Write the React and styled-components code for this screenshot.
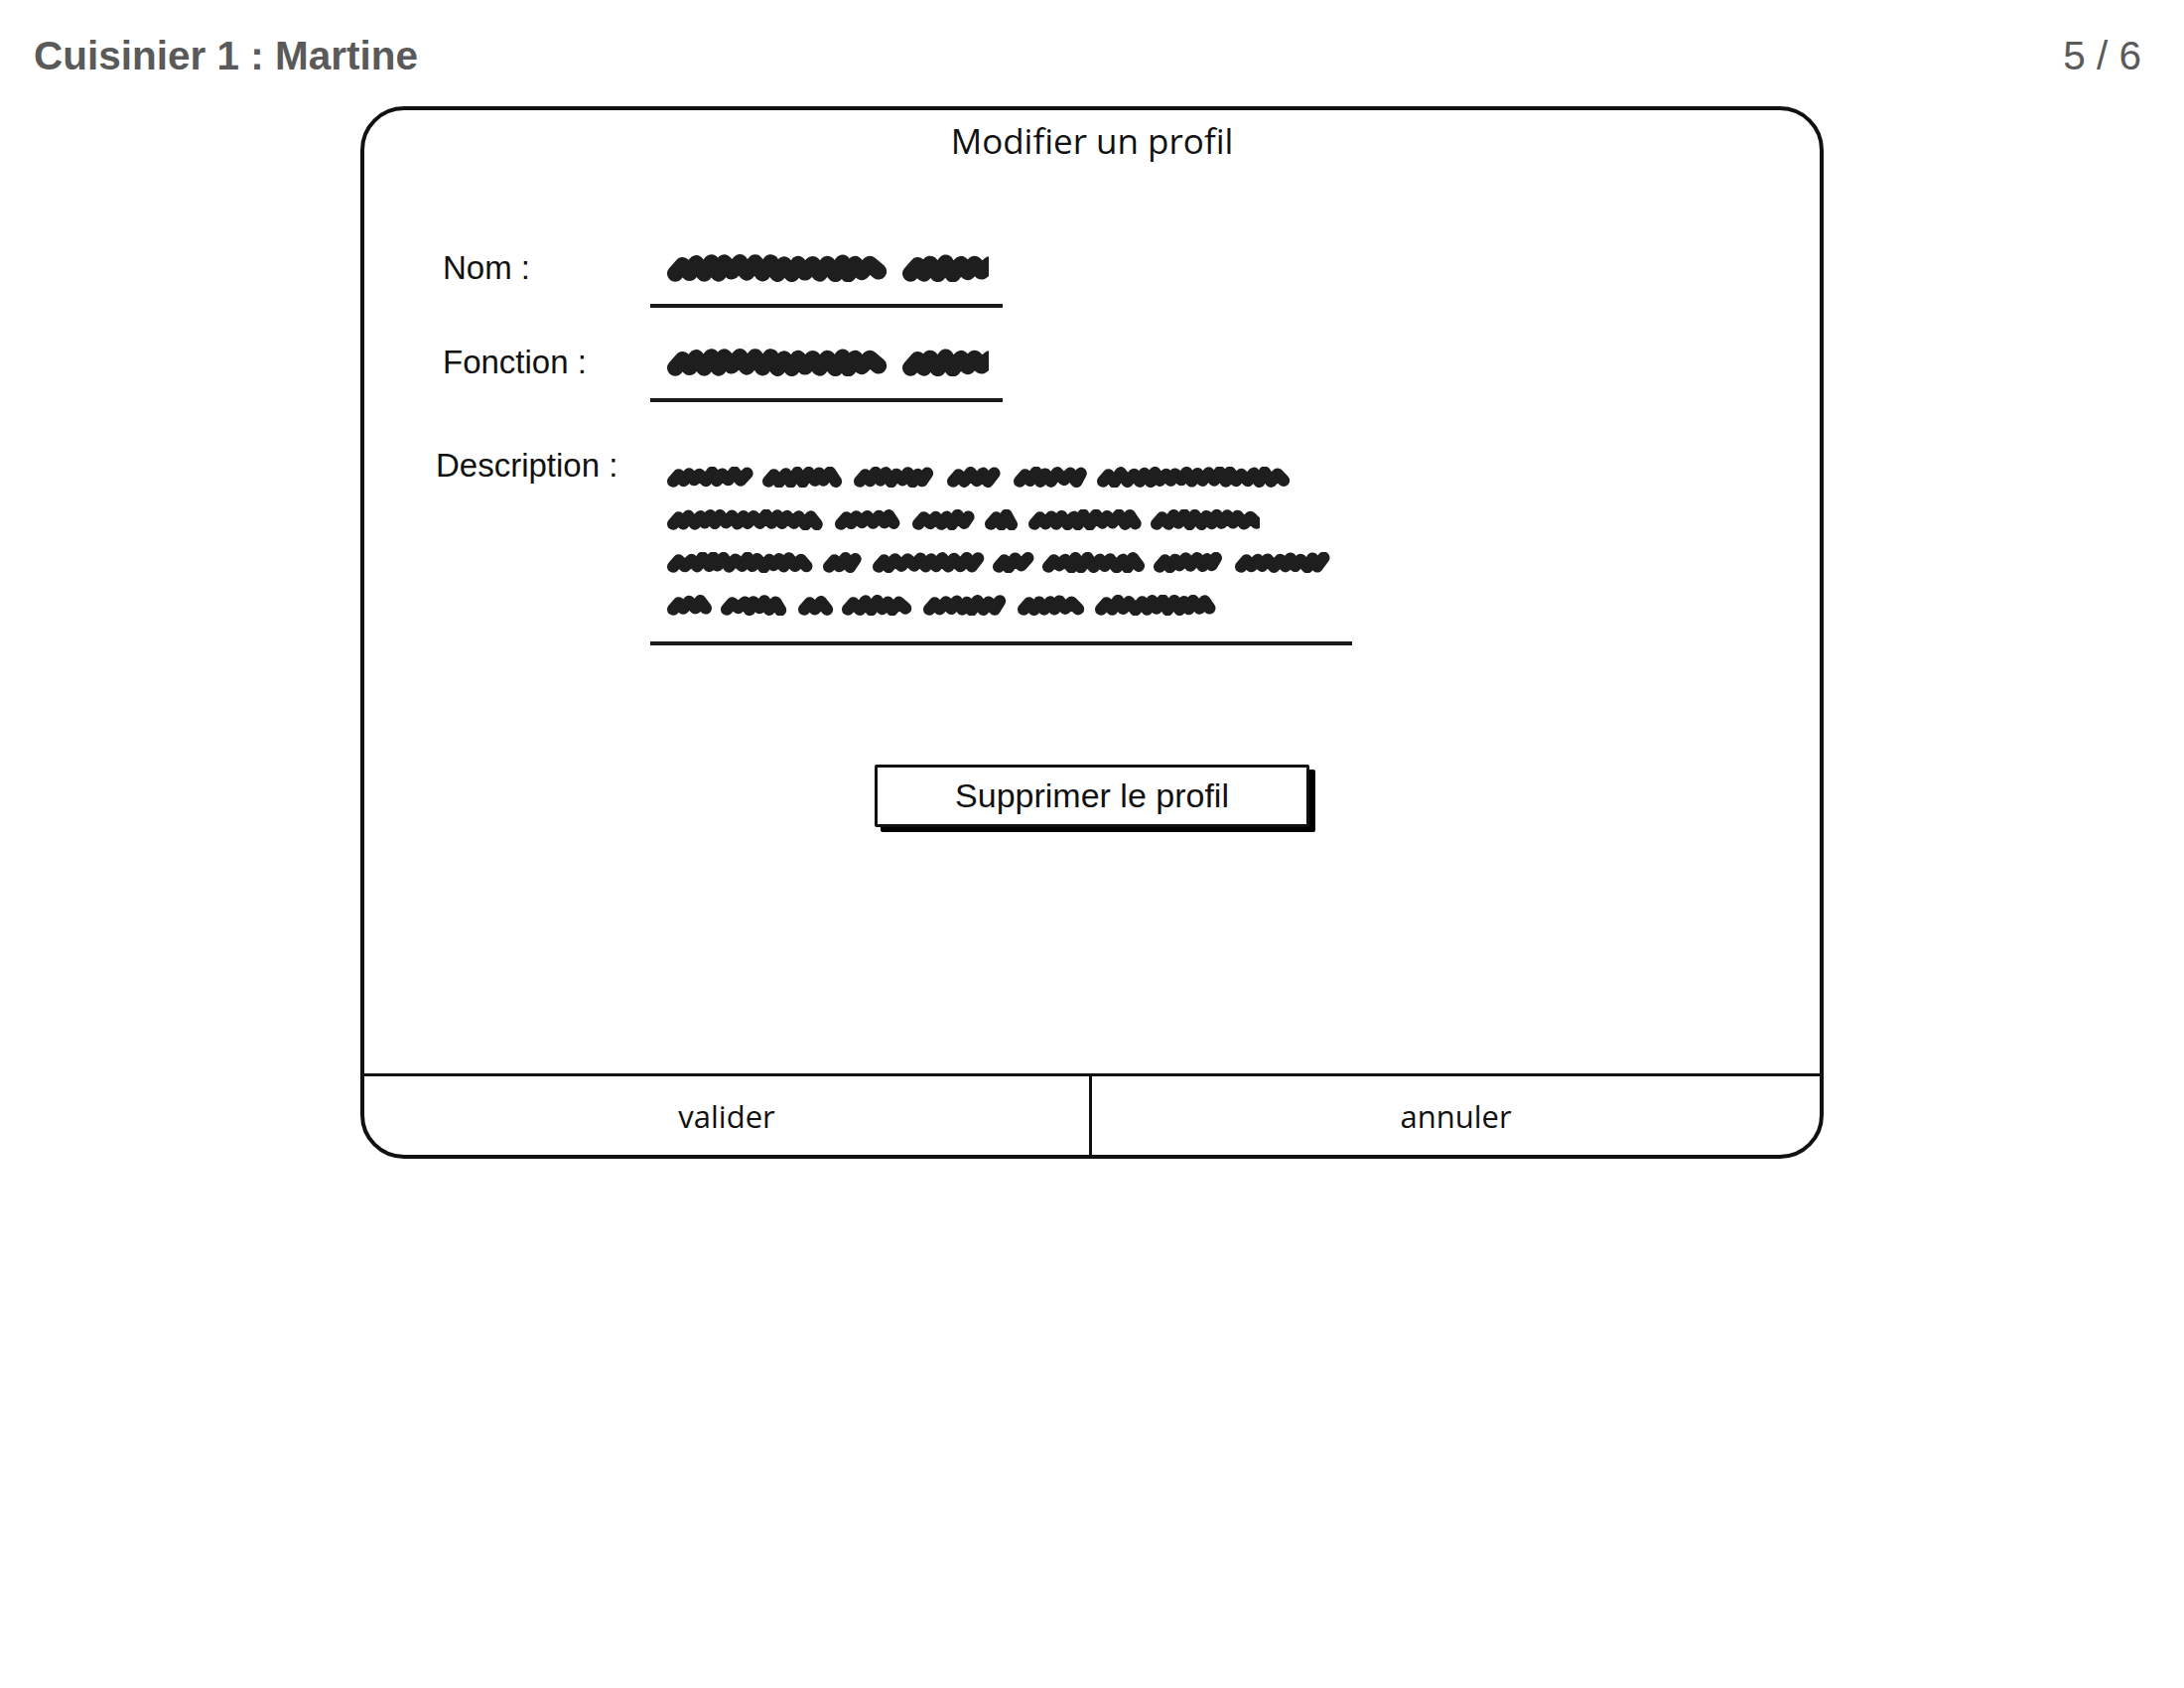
import styled, { createGlobalStyle } from 'styled-components';

const GlobalStyle = createGlobalStyle`
    html, body {
        margin: 0;
        padding: 0;
        background: #fff;
    }
    body {
        width: 2200px;
        min-height: 1700px;
        font-family: "Liberation Sans", Arial, sans-serif;
        color: #111;
    }
`;

const descriptionLines = [
    [85, 81, 83, 56, 73, 197],
    [158, 67, 62, 33, 112, 110],
    [146, 39, 110, 39, 101, 71, 98],
    [43, 67, 33, 71, 84, 67, 124],
];

// small deterministic jitter so the scribble isn't perfectly regular
const jitter = (n) => {
    const s = Math.sin(n * 12.9898) * 43758.5453;
    return s - Math.floor(s) - 0.5;
};

// lumpy zigzag stroke that reads as scribbled-out text
const scribblePath = (w, h, seed) => {
    const sw = h * 0.58;
    const top = h * 0.32;
    const bot = h * 0.68;
    const step = h * 0.26;
    let d = `M ${sw / 2} ${bot + h * 0.02} L ${sw / 2 + step} ${top + h * 0.08}`;
    let x = sw / 2 + step;
    let up = true;
    let i = 0;
    while (x < w - sw / 2 - step * 0.6) {
        x += step * (1 + jitter(seed + i) * 0.5);
        up = !up;
        const y = (up ? top : bot) + jitter(seed + i * 7 + 3) * h * 0.12;
        d += ` L ${x.toFixed(1)} ${y.toFixed(1)}`;
        i += 1;
    }
    return d;
};

const Scribble = ({ words, height = 21, gap = 11, clip }) => {
    let x = 0;
    const parts = words.map((w) => {
        const p = { x, w };
        x += w + gap;
        return p;
    });
    const total = x - gap;
    const width = clip ? Math.min(clip, total) : total;
    return (
        <ScribbleSvg width={width} height={height} viewBox={`0 0 ${width} ${height}`}>
            {parts.map((p, i) => (
                <path
                    key={i}
                    transform={`translate(${p.x} 0)`}
                    d={scribblePath(p.w, height, p.x + p.w)}
                    fill="none"
                    stroke="#1e1e1e"
                    strokeWidth={height * 0.58}
                    strokeLinecap="round"
                    strokeLinejoin="round"
                />
            ))}
        </ScribbleSvg>
    );
};

const App = () => {
    return (
        <>
            <GlobalStyle />
            <Page>
                <Header>
                    <PageTitle>Cuisinier 1 : Martine</PageTitle>
                    <PageCount>5 / 6</PageCount>
                </Header>
                <Frame>
                    <FrameTitle>Modifier un profil</FrameTitle>
                    <Form>
                        <Label>Nom :</Label>
                        <Field $width={355} $pad="13px 0 22px 17px">
                            <Scribble words={[221, 110]} height={28} gap={16} clip={324} />
                        </Field>

                        <Label>Fonction :</Label>
                        <Field $width={355} $pad="13px 0 22px 17px">
                            <Scribble words={[221, 110]} height={28} gap={16} clip={324} />
                        </Field>

                        <Label $shift={-7} $offset={9}>Description :</Label>
                        <Field $width={707} $pad="28px 0 26px 17px" $offset={9}>
                            {descriptionLines.map((line, i) => (
                                <Scribble key={i} words={line} />
                            ))}
                        </Field>
                    </Form>
                    <ButtonRow>
                        <DeleteButton>Supprimer le profil</DeleteButton>
                    </ButtonRow>
                    <Spacer />
                    <Footer>
                        <FooterButton>valider</FooterButton>
                        <FooterButton $divider>annuler</FooterButton>
                    </Footer>
                </Frame>
            </Page>
        </>
    );
};

export default App;

const Page = styled.div`
    width: 2200px;
    min-height: 1700px;
    box-sizing: border-box;
`;

const Header = styled.header`
    display: flex;
    justify-content: space-between;
    align-items: flex-start;
    padding: 33px 43px 0 34px;
    height: 82px;
    box-sizing: border-box;
`;

const PageTitle = styled.h1`
    margin: 0;
    font-size: 40.5px;
    line-height: 46px;
    font-weight: 700;
    color: #5a5a5a;
`;

const PageCount = styled.span`
    font-size: 40.5px;
    line-height: 46px;
    color: #5a5a5a;
`;

const Frame = styled.section`
    margin: 25px auto 0;
    width: 1474px;
    height: 1060px;
    box-sizing: border-box;
    border: 4px solid #111;
    border-radius: 44px;
    display: flex;
    flex-direction: column;
    overflow: hidden;
`;

const FrameTitle = styled.h2`
    margin: 11px 0 0;
    text-align: center;
    font-family: "Open Sans", "Noto Sans", sans-serif;
    font-weight: 400;
    font-size: 35px;
    line-height: 40px;
`;

const Form = styled.div`
    margin-top: 81px;
    padding-left: 79px;
    display: grid;
    grid-template-columns: 209px auto;
    row-gap: 28px;
    align-items: start;
    justify-items: start;
`;

const Label = styled.label`
    padding-top: 8px;
    margin-top: ${(p) => p.$offset || 0}px;
    margin-left: ${(p) => p.$shift || 0}px;
    font-size: 33px;
    line-height: 38px;
`;

const Field = styled.div`
    width: ${(p) => p.$width}px;
    margin-top: ${(p) => p.$offset || 0}px;
    padding: ${(p) => p.$pad};
    box-sizing: border-box;
    border-bottom: 4px solid #1a1a1a;
    display: flex;
    flex-direction: column;
    gap: 22px;
    overflow: hidden;
`;

const ScribbleSvg = styled.svg`
    display: block;
    flex-shrink: 0;
`;

const ButtonRow = styled.div`
    margin-top: 120px;
    display: flex;
    justify-content: center;
`;

const DeleteButton = styled.button`
    width: 438px;
    height: 63px;
    box-sizing: border-box;
    border: 3px solid #111;
    border-radius: 2px;
    background: #fff;
    box-shadow: 6px 5px 0 #000;
    font-family: "Liberation Sans", Arial, sans-serif;
    font-size: 34px;
    color: #111;
    padding: 0;
`;

const Spacer = styled.div`
    flex: 1;
`;

const Footer = styled.div`
    display: grid;
    grid-template-columns: 730px 1fr;
    height: 82px;
    border-top: 3px solid #111;
    box-sizing: border-box;
`;

const FooterButton = styled.div`
    display: flex;
    align-items: center;
    justify-content: center;
    border-left: ${(p) => (p.$divider ? '3px solid #111' : 'none')};
    font-family: "Open Sans", "Noto Sans", sans-serif;
    font-size: 31px;
    color: #111;
`;
